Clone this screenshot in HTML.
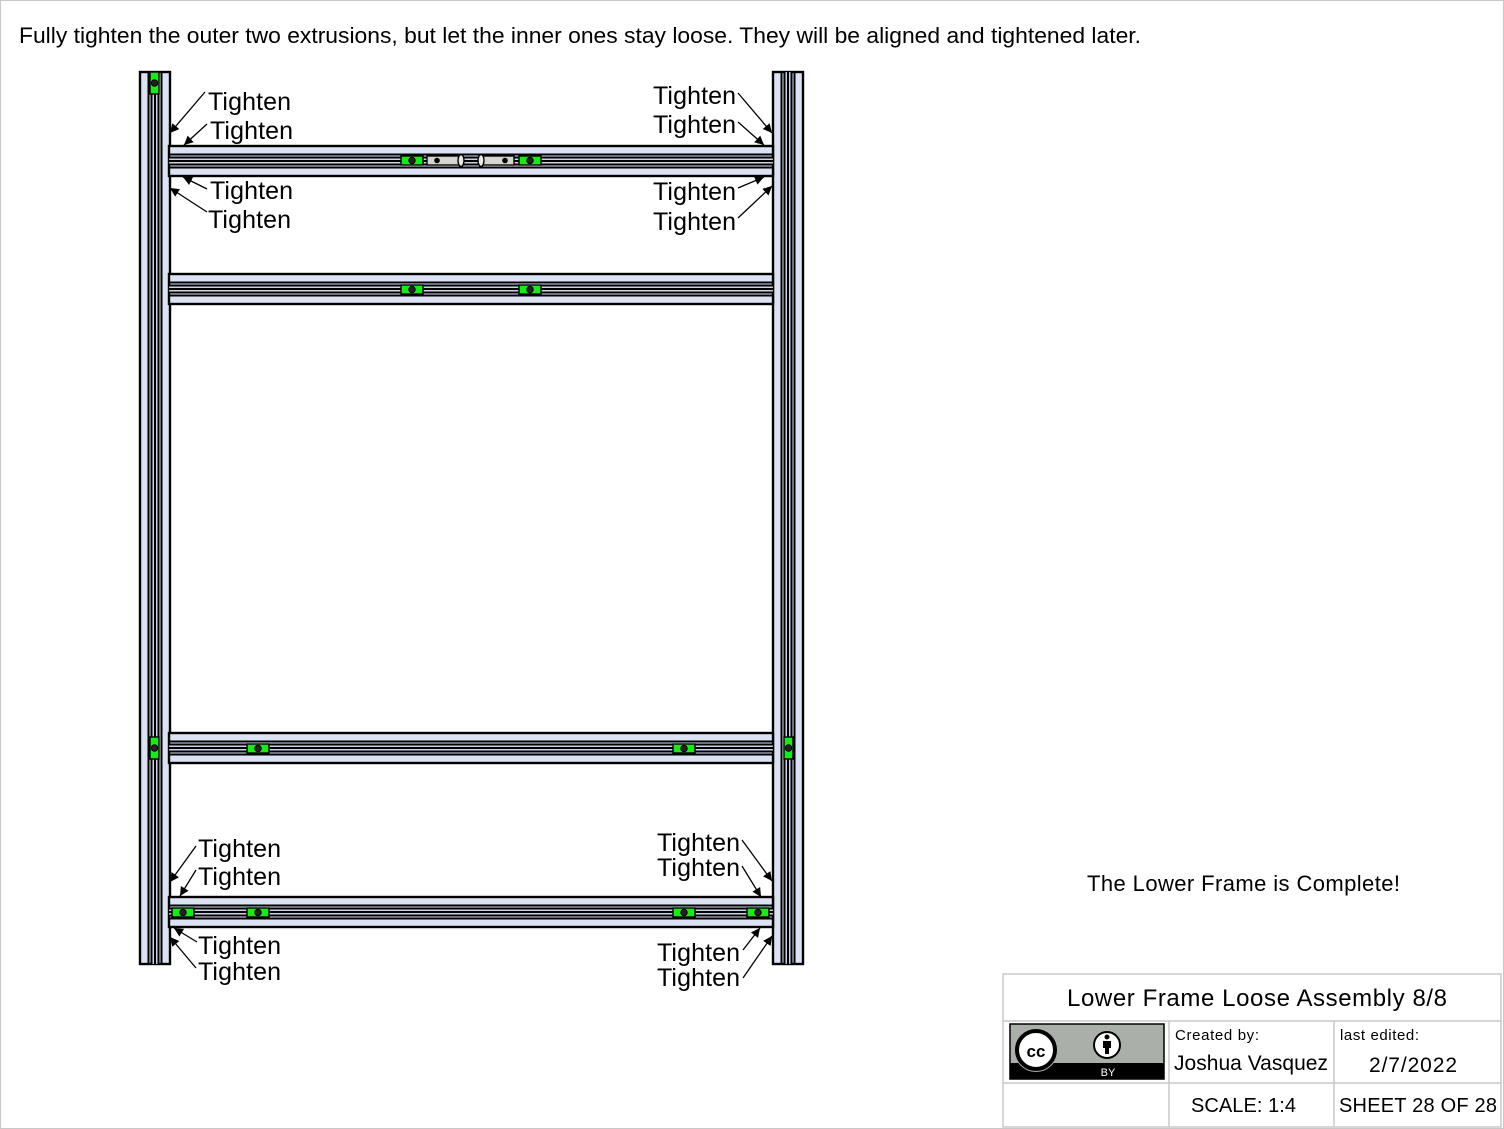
<!DOCTYPE html>
<html><head><meta charset="utf-8"><style>
html,body{margin:0;padding:0;background:#fff;}
body{width:1504px;height:1129px;overflow:hidden;position:relative;font-family:"Liberation Sans",Arial,sans-serif;}
svg{position:absolute;left:0;top:0;}
</style></head><body>
<svg width="1504" height="1129" viewBox="0 0 1504 1129" xmlns="http://www.w3.org/2000/svg" font-family="Liberation Sans, Arial, sans-serif">
<defs>
<marker id="ah" viewBox="0 0 10 10" refX="10" refY="5" markerWidth="18" markerHeight="9" markerUnits="userSpaceOnUse" orient="auto"><path d="M0,0 L10,5 L0,10 z" fill="#000"/></marker>
<g id="hbar">
<rect x="0" y="0" width="604" height="30" fill="#dbe2f4" stroke="#000" stroke-width="2.4"/>
<g stroke="#000" stroke-width="2">
<line x1="0" y1="8.5" x2="604" y2="8.5"/><line x1="0" y1="11.5" x2="604" y2="11.5"/>
<line x1="0" y1="15" x2="604" y2="15"/><line x1="0" y1="18.5" x2="604" y2="18.5"/><line x1="0" y1="21.5" x2="604" y2="21.5"/>
</g>
<rect x="0" y="12.6" width="604" height="1.3" fill="#c8d0e4"/><rect x="0" y="16.2" width="604" height="1.3" fill="#c8d0e4"/>
</g>
<g id="vbar">
<rect x="0" y="0" width="30" height="892" fill="#dbe2f4" stroke="#000" stroke-width="2.4"/>
<g stroke="#000" stroke-width="2">
<line y1="0" x1="8.5" y2="892" x2="8.5"/><line y1="0" x1="11.5" y2="892" x2="11.5"/>
<line y1="0" x1="15" y2="892" x2="15"/><line y1="0" x1="18.5" y2="892" x2="18.5"/><line y1="0" x1="21.5" y2="892" x2="21.5"/>
</g>
<rect y="0" x="12.6" height="892" width="1.3" fill="#c8d0e4"/><rect y="0" x="16.2" height="892" width="1.3" fill="#c8d0e4"/>
</g>
<g id="gh"><rect x="0" y="0" width="22" height="9" fill="#1ee61e" stroke="#000" stroke-width="1.4"/><circle cx="11" cy="4.5" r="3.2" fill="#222" stroke="#000"/></g>
<g id="gv"><rect x="0" y="0" width="9" height="22" fill="#1ee61e" stroke="#000" stroke-width="1.4"/><circle cx="4.5" cy="11" r="3.2" fill="#222" stroke="#000"/></g>
</defs>
<rect x="0.5" y="0.5" width="1503" height="1128" fill="#fff" stroke="#c8c8c8"/>
<text x="19" y="43" font-size="22" fill="#000" textLength="1122" lengthAdjust="spacingAndGlyphs">Fully tighten the outer two extrusions, but let the inner ones stay loose. They will be aligned and tightened later.</text>

<use href="#vbar" x="140" y="72"/>
<use href="#vbar" x="773" y="72"/>
<use href="#hbar" x="169" y="146"/>
<use href="#hbar" x="169" y="274"/>
<use href="#hbar" x="169" y="733"/>
<use href="#hbar" x="169" y="897"/>

<use href="#gv" x="150" y="72"/>
<use href="#gv" x="150" y="737"/>
<use href="#gv" x="784" y="737"/>
<use href="#gh" x="401" y="156"/><use href="#gh" x="519" y="156"/>
<g stroke="#000" stroke-width="1.4" fill="#d4d4d0">
<rect x="427" y="156" width="32" height="9"/><rect x="482" y="156" width="32" height="9"/>
<ellipse cx="461" cy="160.5" rx="3" ry="6" fill="#e8e8e4"/><ellipse cx="481" cy="160.5" rx="3" ry="6" fill="#e8e8e4"/>
</g>
<circle cx="437" cy="160.5" r="2.8"/><circle cx="505" cy="160.5" r="2.8"/>
<use href="#gh" x="401" y="285"/><use href="#gh" x="519" y="285"/>
<use href="#gh" x="247" y="744"/><use href="#gh" x="673" y="744"/>
<use href="#gh" x="172" y="908"/><use href="#gh" x="247" y="908"/><use href="#gh" x="673" y="908"/><use href="#gh" x="747" y="908"/>

<g font-size="25" fill="#000">
<text x="208" y="110" textLength="83">Tighten</text><text x="210" y="139" textLength="83">Tighten</text>
<text x="210" y="199" textLength="83">Tighten</text><text x="208" y="228" textLength="83">Tighten</text>
<text x="653" y="104" textLength="83">Tighten</text><text x="653" y="133" textLength="83">Tighten</text>
<text x="653" y="200" textLength="83">Tighten</text><text x="653" y="230" textLength="83">Tighten</text>
<text x="198" y="857" textLength="83">Tighten</text><text x="198" y="885" textLength="83">Tighten</text>
<text x="198" y="954" textLength="83">Tighten</text><text x="198" y="980" textLength="83">Tighten</text>
<text x="657" y="851" textLength="83">Tighten</text><text x="657" y="876" textLength="83">Tighten</text>
<text x="657" y="961" textLength="83">Tighten</text><text x="657" y="986" textLength="83">Tighten</text>
</g>
<g stroke="#000" stroke-width="1.3" marker-end="url(#ah)">
<line x1="205" y1="92" x2="170" y2="133"/><line x1="207" y1="124" x2="184" y2="145"/>
<line x1="207" y1="189" x2="183" y2="177"/><line x1="207" y1="212" x2="170" y2="188"/>
<line x1="738" y1="93" x2="772" y2="133"/><line x1="738" y1="122" x2="764" y2="145"/>
<line x1="738" y1="188" x2="764" y2="177"/><line x1="738" y1="218" x2="772" y2="186"/>
<line x1="196" y1="846" x2="170" y2="882"/><line x1="196" y1="870" x2="180" y2="896"/>
<line x1="197" y1="942" x2="174" y2="928"/><line x1="196" y1="968" x2="170" y2="937"/>
<line x1="742" y1="840" x2="772" y2="881"/><line x1="742" y1="866" x2="761" y2="897"/>
<line x1="743" y1="950" x2="760" y2="928"/><line x1="743" y1="978" x2="772" y2="936"/>
</g>

<text x="1087" y="891" font-size="22" textLength="313">The Lower Frame is Complete!</text>

<g stroke="#c8c8c8" stroke-width="1.5" fill="none">
<rect x="1003" y="974" width="498" height="153"/>
<line x1="1003" y1="1021" x2="1501" y2="1021"/>
<line x1="1003" y1="1083" x2="1501" y2="1083"/>
<line x1="1169" y1="1021" x2="1169" y2="1127"/>
<line x1="1334" y1="1021" x2="1334" y2="1127"/>
</g>
<text x="1067" y="1006" font-size="24" textLength="380">Lower Frame Loose Assembly 8/8</text>
<text x="1175" y="1040" font-size="15" textLength="84">Created by:</text>
<text x="1174" y="1070" font-size="21" textLength="154">Joshua Vasquez</text>
<text x="1340" y="1040" font-size="15" textLength="79">last edited:</text>
<text x="1369" y="1072" font-size="21" textLength="88">2/7/2022</text>
<text x="1191" y="1112" font-size="20" textLength="105">SCALE: 1:4</text>
<text x="1339" y="1112" font-size="20" textLength="158">SHEET 28 OF 28</text>

<rect x="1010" y="1024" width="154" height="55" fill="#aab0a9" stroke="#000" stroke-width="1.5"/>
<rect x="1010" y="1063" width="154" height="16" fill="#000"/>
<text x="1108" y="1076" font-size="11" fill="#fff" text-anchor="middle">BY</text>
<circle cx="1036" cy="1050" r="22" fill="#aab0a9"/>
<circle cx="1036" cy="1050" r="19" fill="#fff" stroke="#000" stroke-width="4"/>
<text x="1036" y="1057" font-size="17" font-weight="bold" text-anchor="middle" fill="#000">cc</text>
<circle cx="1107" cy="1045" r="13" fill="#fff" stroke="#000" stroke-width="2"/>
<circle cx="1107" cy="1037" r="2.5" fill="#000"/>
<rect x="1103" y="1041" width="8" height="7" fill="#000"/><rect x="1105" y="1047" width="4" height="7" fill="#000"/>
</svg>
</body></html>
